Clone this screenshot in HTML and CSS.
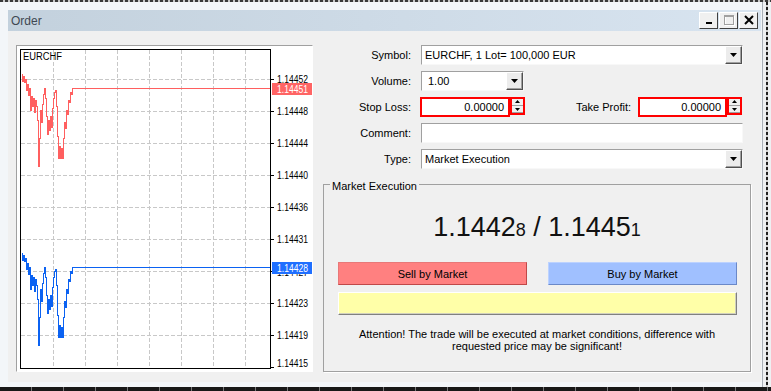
FILE: index.html
```html
<!DOCTYPE html>
<html>
<head>
<meta charset="utf-8">
<title>Order</title>
<link rel="stylesheet" href="styles.css">
</head>
<body>
<div class="screen">
  <div class="topedge"></div>
  <div class="mid">
    <div class="window">
      <div class="titlebar">
        <span class="title">Order</span>
        <div class="tbuttons">
          <span class="tbtn"><svg width="17" height="15" viewBox="0 0 17 15"><rect x="6" y="9" width="6" height="2" fill="#000"/></svg></span>
          <span class="tbtn"><svg width="17" height="15" viewBox="0 0 17 15"><rect x="5.5" y="3.5" width="9" height="9" fill="none" stroke="#fff"/><rect x="4.5" y="2.5" width="9" height="9" fill="none" stroke="#a0a0a0"/><rect x="4" y="2" width="10" height="2" fill="#a0a0a0"/></svg></span>
          <span class="tbtn"><svg width="17" height="15" viewBox="0 0 17 15"><path d="M5 3L13 11M13 3L5 11" stroke="#000" stroke-width="2" fill="none"/></svg></span>
        </div>
      </div>
      <div class="content">
        <div class="chart">
          <svg width="295" height="325" viewBox="17 46 295 325" xmlns="http://www.w3.org/2000/svg">
            <g stroke="#c8c8c8" stroke-width="1" stroke-dasharray="4 2" fill="none">
              <path d="M53.5 50V368M85.5 50V368M117.5 50V368M149.5 50V368M181.5 50V368M213.5 50V368M245.5 50V368"/>
              <path d="M21 79.5H270M21 111.5H270M21 143.5H270M21 175.5H270M21 207.5H270M21 239.5H270M21 271.5H270M21 303.5H270M21 335.5H270"/>
            </g>
            <rect x="20.5" y="49.5" width="250" height="319" fill="none" stroke="#000"/>
            <path d="M271 79.5h3M271 111.5h3M271 143.5h3M271 175.5h3M271 207.5h3M271 239.5h3M271 271.5h3M271 303.5h3M271 335.5h3M271 367.5h3" stroke="#000"/>
            <path fill="none" stroke="#ff5f5f" stroke-width="1" shape-rendering="crispEdges" d="M22.5,74 V81 H23.5 V76 H24.5 V82 H25.5 V79 H26.5 V90 H27.5 V84 H28.5 V95 H29.5 V88 H30.5 V110 H31.5 V96 H32.5 V106 H33.5 V98 H34.5 V112 H35.5 V100 H36.5 V106 H37.5 V120 H38.5 V166 H39.5 V138 H40.5 V110 H41.5 V122 H42.5 V104 H43.5 V94 H44.5 V88 H45.5 V98 H46.5 V116 H47.5 V134 H48.5 V120 H49.5 V130 H50.5 V116 H51.5 V127 H52.5 V108 H53.5 V98 H54.5 V92 H55.5 V90 H56.5 V106 H57.5 V136 H58.5 V158 H59.5 V146 H60.5 V158 H61.5 V148 H62.5 V158 H63.5 V138 H64.5 V122 H65.5 V128 H66.5 V110 H67.5 V114 H68.5 V100 H69.5 V102 H70.5 V92 H71.5 V94 H72.5 V88.5 H270"/>
            <path transform="translate(0 179)" fill="none" stroke="#0b62f2" stroke-width="1" shape-rendering="crispEdges" d="M22.5,74 V81 H23.5 V76 H24.5 V82 H25.5 V79 H26.5 V90 H27.5 V84 H28.5 V95 H29.5 V88 H30.5 V110 H31.5 V96 H32.5 V106 H33.5 V98 H34.5 V112 H35.5 V100 H36.5 V106 H37.5 V120 H38.5 V166 H39.5 V138 H40.5 V110 H41.5 V122 H42.5 V104 H43.5 V94 H44.5 V88 H45.5 V98 H46.5 V116 H47.5 V134 H48.5 V120 H49.5 V130 H50.5 V116 H51.5 V127 H52.5 V108 H53.5 V98 H54.5 V92 H55.5 V90 H56.5 V106 H57.5 V136 H58.5 V158 H59.5 V146 H60.5 V158 H61.5 V148 H62.5 V158 H63.5 V138 H64.5 V122 H65.5 V128 H66.5 V110 H67.5 V114 H68.5 V100 H69.5 V102 H70.5 V92 H71.5 V94 H72.5 V88.5 H270"/>
            <g font-family="Liberation Sans, Arial, sans-serif" font-size="10" fill="#000">
              <text x="23" y="60" textLength="39" lengthAdjust="spacingAndGlyphs">EURCHF</text>
              <text x="277" y="83" textLength="31" lengthAdjust="spacingAndGlyphs">1.14452</text>
              <text x="277" y="115" textLength="31" lengthAdjust="spacingAndGlyphs">1.14448</text>
              <text x="277" y="147" textLength="31" lengthAdjust="spacingAndGlyphs">1.14444</text>
              <text x="277" y="179" textLength="31" lengthAdjust="spacingAndGlyphs">1.14440</text>
              <text x="277" y="211" textLength="31" lengthAdjust="spacingAndGlyphs">1.14436</text>
              <text x="277" y="243" textLength="31" lengthAdjust="spacingAndGlyphs">1.14431</text>
              <text x="277" y="276" textLength="31" lengthAdjust="spacingAndGlyphs">1.14427</text>
              <text x="277" y="307" textLength="31" lengthAdjust="spacingAndGlyphs">1.14423</text>
              <text x="277" y="339" textLength="31" lengthAdjust="spacingAndGlyphs">1.14419</text>
              <text x="277" y="367" textLength="31" lengthAdjust="spacingAndGlyphs">1.14415</text>
            </g>
            <rect x="272" y="83" width="40" height="12" fill="#ff6464"/>
            <rect x="272" y="262" width="40" height="12" fill="#1f6fff"/>
            <g font-family="Liberation Sans, Arial, sans-serif" font-size="10" fill="#fff">
              <text x="277" y="92.5" textLength="31" lengthAdjust="spacingAndGlyphs">1.14451</text>
              <text x="277" y="271.5" textLength="31" lengthAdjust="spacingAndGlyphs">1.14428</text>
            </g>
          </svg>
        </div>
        <div class="form">
          <div class="fields">
            <span class="lbl">Symbol:</span>
            <div class="box">
              <span class="val">EURCHF, 1 Lot= 100,000 EUR</span>
              <span class="dd"><svg width="7" height="4" viewBox="0 0 7 4"><path d="M0 0H7L3.5 4Z" fill="#000"/></svg></span>
            </div>
            <span class="lbl">Volume:</span>
            <div class="box vol">
              <span class="val">1.00</span>
              <span class="dd"><svg width="7" height="4" viewBox="0 0 7 4"><path d="M0 0H7L3.5 4Z" fill="#000"/></svg></span>
            </div>
            <span class="lbl">Stop Loss:</span>
            <div class="sltp">
              <div class="num sl">0.00000</div>
              <div class="spin">
                <span class="sb"><svg width="5" height="3" viewBox="0 0 5 3"><path d="M0 3H5L2.5 0Z" fill="#000"/></svg></span>
                <span class="sb"><svg width="5" height="3" viewBox="0 0 5 3"><path d="M0 0H5L2.5 3Z" fill="#000"/></svg></span>
              </div>
              <span class="tplabel">Take Profit:</span>
              <div class="num tp">0.00000</div>
              <div class="spin last">
                <span class="sb"><svg width="5" height="3" viewBox="0 0 5 3"><path d="M0 3H5L2.5 0Z" fill="#000"/></svg></span>
                <span class="sb"><svg width="5" height="3" viewBox="0 0 5 3"><path d="M0 0H5L2.5 3Z" fill="#000"/></svg></span>
              </div>
            </div>
            <span class="lbl">Comment:</span>
            <div class="box"></div>
            <span class="lbl">Type:</span>
            <div class="box">
              <span class="val">Market Execution</span>
              <span class="dd"><svg width="7" height="4" viewBox="0 0 7 4"><path d="M0 0H7L3.5 4Z" fill="#000"/></svg></span>
            </div>
          </div>
          <div class="group">
            <div class="legend">Market Execution</div>
            <div class="price">1.1442<small>8</small> / 1.1445<small>1</small></div>
            <div class="btns">
              <div class="btn sell">Sell by Market</div>
              <div class="btn buy">Buy by Market</div>
            </div>
            <div class="yellow"></div>
            <p class="attn">Attention! The trade will be executed at market conditions, difference with<br>requested price may be significant!</p>
          </div>
        </div>
      </div>
    </div>
    <div class="rightedge"><div class="vdash"></div></div>
  </div>
  <div class="bottomedge"></div>
</div>
</body>
</html>
```

FILE: styles.css
```css
* { box-sizing: border-box; }
html, body { margin: 0; padding: 0; }
body {
  width: 771px;
  height: 391px;
  overflow: hidden;
  background: #f2f4f7;
  font-family: "Liberation Sans", Arial, sans-serif;
  font-size: 11px;
  color: #000;
}
.screen { display: flex; flex-direction: column; width: 771px; height: 391px; }
.topedge {
  height: 2px;
  background: repeating-linear-gradient(90deg, #3a3a3a 0 3px, #c8c8c8 3px 5px);
}
.mid { display: flex; height: 385px; }
.window {
  width: 763px;
  height: 385px;
  background: #f3f6f9;
  padding: 8px 1px 5px 8px;
  border-right: 1px solid #aab0b8;
  display: flex;
  flex-direction: column;
}
.rightedge {
  flex: 1;
  background: #eef0f2;
  padding-left: 3px;
}
.vdash {
  width: 2px;
  height: 100%;
  background: repeating-linear-gradient(180deg, #202020 0 3px, #cfcfcf 3px 5px);
}
.bottomedge {
  height: 4px;
  background: repeating-linear-gradient(90deg, #181818 0 31px, #777 31px 32px);
}
.titlebar {
  height: 21px;
  flex: none;
  display: flex;
  align-items: center;
  justify-content: space-between;
  background: linear-gradient(90deg, #c3d1dd, #d8e4f0);
  padding: 0 3px 0 3px;
}
.title { font-size: 12px; color: #3f4852; }
.tbuttons { display: flex; gap: 1px; }
.tbtn {
  width: 19px;
  height: 17px;
  background: #f0f0f0;
  border: 1px solid;
  border-color: #fff #404040 #404040 #fff;
  display: flex;
}
.tbtn svg { display: block; }
.content {
  height: 351px;
  flex: none;
  background: #f0f0f0;
  display: flex;
  align-items: flex-start;
}
.chart {
  margin: 14px 0 0 8px;
  width: 297px;
  height: 327px;
  border: 1px solid;
  border-color: #a0a0a0 #fff #fff #a0a0a0;
  background: #fff;
}
.chart svg { display: block; }
.form { width: 448px; padding-top: 14px; }
.fields {
  display: grid;
  grid-template-columns: 98px 322px;
  column-gap: 10px;
  row-gap: 6px;
  grid-auto-rows: 20px;
  align-items: center;
}
.lbl { text-align: right; white-space: nowrap; }
.box {
  height: 20px;
  background: #fff;
  border: 1px solid;
  border-color: #a0a0a0 #f8f8f8 #f8f8f8 #a0a0a0;
  display: flex;
  align-items: center;
}
.val { flex: 1; padding-left: 3px; white-space: nowrap; }
.vol { width: 103px; }
.vol .val { padding-left: 6px; }
.dd {
  width: 17px;
  height: 18px;
  background: #ececec;
  border: 1px solid;
  border-color: #fff #505050 #505050 #fff;
  box-shadow: inset -1px -1px 0 #a0a0a0;
  display: flex;
  align-items: center;
  justify-content: center;
}
.dd svg { display: block; }
.sltp { display: flex; align-items: flex-start; height: 20px; }
.num {
  width: 90px;
  height: 20px;
  border: 2px solid #f00;
  background: #fff;
  text-align: right;
  padding-right: 4px;
  line-height: 16px;
}
.sl { margin-left: -1px; }
.tp { width: 89px; }
.spin {
  width: 15px;
  height: 18px;
  border: 2px solid #f00;
  background: #f0f0f0;
  display: flex;
  flex-direction: column;
  gap: 1px;
}
.spin.last { margin-right: 1px; }
.sb {
  flex: 1;
  display: flex;
  align-items: center;
  justify-content: center;
  background: #f0f0f0;
  border-bottom: 1px solid #a0a0a0;
}
.sb svg { display: block; }
.tplabel { margin-left: auto; margin-right: 7px; align-self: center; white-space: nowrap; }
.group {
  margin: 15px 0 0 10px;
  width: 428px;
  height: 188px;
  border: 1px solid #a0a0a0;
  box-shadow: 1px 1px 0 #fff;
}
.legend {
  display: table;
  margin: -5px 0 0 6px;
  padding: 0 2px;
  background: #f0f0f0;
  line-height: 13px;
}
.price {
  margin-top: 18px;
  text-align: center;
  font-size: 27px;
  line-height: 32px;
  color: #111;
}
.price small { font-size: 18px; }
.btns {
  display: flex;
  justify-content: space-between;
  margin-top: 16px;
  padding: 0 13px 0 14px;
}
.btn {
  width: 189px;
  height: 23px;
  display: flex;
  align-items: center;
  justify-content: center;
  border: 1px solid;
}
.sell { background: #ff8080; border-color: #e87878 #c04848 #c04848 #e87878; }
.buy { background: #a0c0ff; border-color: #bcd2ff #6a88c8 #6a88c8 #bcd2ff; }
.yellow {
  margin: 7px 13px 0 14px;
  height: 23px;
  background: #ffffa8;
  border: 1px solid;
  border-color: #fff #808080 #808080 #fff;
  box-shadow: inset -1px -1px 0 #d0d0c0;
}
.attn { margin: 13px 0 0; text-align: center; line-height: 12px; }
```
